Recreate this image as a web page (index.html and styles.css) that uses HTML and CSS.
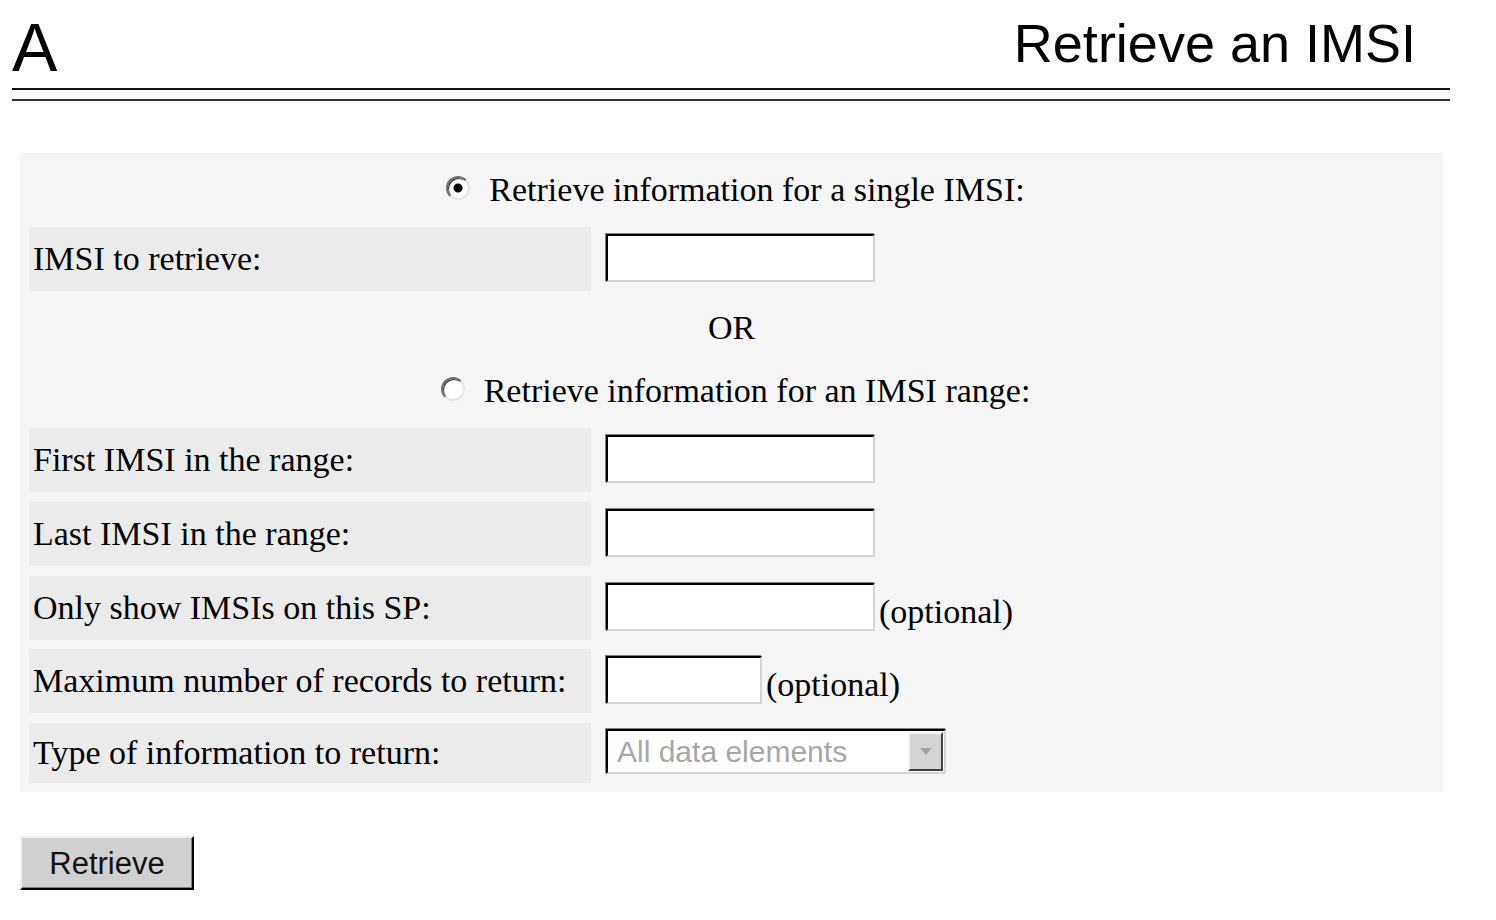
FILE: index.html
```html
<!DOCTYPE html>
<html>
<head>
<meta charset="utf-8">
<title>Retrieve an IMSI</title>
<link rel="stylesheet" href="styles.css">
</head>
<body>
<div class="page">
  <div class="header">
    <span class="logo">A</span>
    <span class="title">Retrieve an IMSI</span>
  </div>
  <div class="rule"></div>

  <form class="panel">
    <div class="radio-row">
      <label class="radio-label"><input type="radio" name="mode" class="radio" checked>Retrieve information for a single IMSI:</label>
    </div>

    <div class="label">IMSI to retrieve:</div>
    <div class="field"><input type="text" class="text wide"></div>

    <div class="or-row">OR</div>

    <div class="radio-row second">
      <label class="radio-label"><input type="radio" name="mode" class="radio">Retrieve information for an IMSI range:</label>
    </div>

    <div class="label">First IMSI in the range:</div>
    <div class="field"><input type="text" class="text wide"></div>

    <div class="label">Last IMSI in the range:</div>
    <div class="field"><input type="text" class="text wide"></div>

    <div class="label">Only show IMSIs on this SP:</div>
    <div class="field"><input type="text" class="text wide"><span class="opt">(optional)</span></div>

    <div class="label">Maximum number of records to return:</div>
    <div class="field"><input type="text" class="text narrow"><span class="opt">(optional)</span></div>

    <div class="label short">Type of information to return:</div>
    <div class="field short">
      <div class="select">
        <span class="select-text">All data elements</span>
        <span class="select-arrow">
          <svg width="12" height="8" viewBox="0 0 12 8"><polygon points="0,0 12,0 6,7" fill="#a4a4a4"/></svg>
        </span>
      </div>
    </div>
  </form>

  <div class="actions">
    <button type="button" class="btn">Retrieve</button>
  </div>
</div>
</body>
</html>
```
FILE: styles.css
```css
html, body {
  margin: 0;
  padding: 0;
  background: #ffffff;
}

.page {
  width: 1438px;
  padding-left: 12px;
  font-family: "Liberation Serif", "Times New Roman", serif;
  color: #000;
}

.header {
  display: flex;
  justify-content: space-between;
  align-items: flex-start;
  padding-top: 13px;
  height: 75px;
  box-sizing: border-box;
}

.logo {
  font-family: "Liberation Sans", Arial, sans-serif;
  font-size: 68px;
  line-height: 1;
  margin-left: 0;
}

.title {
  font-family: "Liberation Sans", Arial, sans-serif;
  font-size: 54px;
  line-height: 1;
  margin-top: 3px;
  margin-right: 34px;
}

.rule {
  margin-top: 13px;
  height: 9px;
  border-top: 2px solid #111;
  border-bottom: 2px solid #333;
  background: #fafafa;
}

.panel {
  margin: 52px 7px 0 8px;
  background: #f5f5f5;
  display: grid;
  grid-template-columns: 562px 1fr;
  column-gap: 15px;
  row-gap: 9.75px;
  padding: 9px 9px 9px 9px;
}

.radio-row {
  grid-column: 1 / -1;
  height: 55px;
  display: flex;
  align-items: center;
  justify-content: center;
  padding-left: 8px;
}

.radio-row.second {
  height: 54px;
}

.radio-label {
  display: flex;
  align-items: center;
  font-size: 34px;
  line-height: 1;
  cursor: default;
}

.radio {
  appearance: none;
  -webkit-appearance: none;
  margin: 0 19px 4px 0;
  width: 24px;
  height: 24px;
  border-radius: 50%;
  border: 2px solid;
  border-color: #6e6e6e #e4e4e4 #e4e4e4 #6e6e6e;
  background: #ffffff;
  box-shadow: inset 1px 1px 0 #2a2a2a;
  box-sizing: border-box;
}

.radio:checked {
  background: radial-gradient(circle at 50% 50%, #000 0, #000 4px, #fff 5px);
}

.or-row {
  grid-column: 1 / -1;
  height: 54px;
  display: flex;
  align-items: center;
  justify-content: center;
  font-size: 34px;
  line-height: 1;
}

.label {
  background: #ebebeb;
  height: 64px;
  display: flex;
  align-items: center;
  padding-left: 4px;
  font-size: 34px;
  line-height: 1;
  white-space: nowrap;
}

.field {
  height: 64px;
  display: flex;
  align-items: center;
}

.label.short,
.field.short {
  height: 60px;
}

.text {
  box-sizing: border-box;
  height: 48px;
  margin: -2px 0 0 0;
  border-style: solid;
  border-width: 2px;
  border-color: #000 #d4d4d4 #d4d4d4 #000;
  box-shadow: -1px -1px 0 #808080;
  background: #fff;
  padding: 0 6px;
  font-family: "Liberation Sans", Arial, sans-serif;
  font-size: 28px;
  outline: none;
}

.wide {
  width: 269px;
}

.narrow {
  width: 156px;
}

.opt {
  align-self: flex-end;
  margin: 0 0 11px 4px;
  font-size: 34px;
  line-height: 34px;
}

.select {
  box-sizing: border-box;
  width: 340px;
  height: 45px;
  margin-top: -3px;
  border-style: solid;
  border-width: 2px;
  border-color: #000 #d4d4d4 #d4d4d4 #000;
  box-shadow: -1px -1px 0 #808080;
  background: #fff;
  display: flex;
  align-items: center;
  justify-content: space-between;
  padding: 1px 1px 1px 9px;
}

.select-text {
  font-family: "Liberation Sans", Arial, sans-serif;
  font-size: 30px;
  line-height: 1;
  color: #a6a6a6;
  white-space: nowrap;
}

.select-arrow {
  box-sizing: border-box;
  width: 35px;
  height: 39px;
  background: #d4d4d4;
  border-style: solid;
  border-width: 2px;
  border-color: #f2f2f2 #404040 #404040 #f2f2f2;
  display: flex;
  align-items: center;
  justify-content: center;
}

.actions {
  padding: 44px 0 0 8px;
}

.btn {
  width: 174px;
  height: 54px;
  box-sizing: border-box;
  background: #d0d0d0;
  border-style: solid;
  border-width: 2px;
  border-color: #f0f0f0 #000 #000 #f0f0f0;
  box-shadow: inset -1px -1px 0 #808080;
  font-family: "Liberation Sans", Arial, sans-serif;
  font-size: 31px;
  color: #111;
  padding: 0;
  margin: 0;
  line-height: 1;
  cursor: default;
}
```
